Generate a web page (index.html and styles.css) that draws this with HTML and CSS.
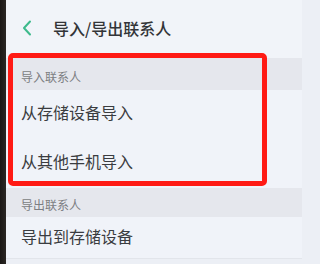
FILE: index.html
```html
<!DOCTYPE html>
<html lang="zh-CN">
<head>
<meta charset="utf-8">
<link rel="stylesheet" href="styles.css">
</head>
<body>
<div class="screen">
  <div class="edge"></div>
  <div class="content">
    <div class="topbar">
      <svg class="back" width="10" height="16" viewBox="0 0 10 16"><path d="M8 1.5 L2 8 L8 14.5" fill="none" stroke="#3dba8c" stroke-width="2" stroke-linecap="round" stroke-linejoin="round"/></svg>
      <span class="title">导入/导出联系人</span>
    </div>
    <div class="band band-first">导入联系人</div>
    <div class="row">从存储设备导入</div>
    <div class="row">从其他手机导入</div>
    <div class="band band-second">导出联系人</div>
    <div class="row row-last">导出到存储设备</div>
  </div>
  <div class="highlight"></div>
</div>
</body>
</html>
```
FILE: styles.css
```css
* { box-sizing: border-box; }
html, body { margin: 0; padding: 0; }
body {
  width: 302px;
  height: 264px;
  overflow: hidden;
  background: #eceff5;
  font-family: "Noto Sans CJK SC", "Noto Sans", sans-serif;
}
.screen {
  position: relative;
  display: flex;
  width: 302px;
  height: 264px;
}
.edge {
  width: 6px;
  flex: none;
  background: linear-gradient(to right, #1a1715, #2b2724);
}
.content {
  flex: 1;
  display: flex;
  flex-direction: column;
}
.topbar {
  height: 58px;
  display: flex;
  align-items: center;
  padding-left: 16px;
  padding-bottom: 2px;
  background: #f1f4f9;
}
.back { margin-right: 21px; }
.title {
  font-size: 16px;
  font-weight: 500;
  color: #333538;
}
.band {
  display: flex;
  align-items: center;
  padding-left: 15px;
  font-size: 12px;
  color: #7c7e82;
  background: #e5e7ed;
}
.band-first { height: 32px; padding-top: 4px; }
.band-second { height: 29px; padding-top: 4px; }
.row {
  height: 49px;
  display: flex;
  align-items: center;
  padding-left: 15px;
  padding-bottom: 6px;
  font-size: 16px;
  color: #3a3c40;
  background: #f0f3f9;
}
.row-last {
  height: 42px;
  padding-bottom: 3px;
  border-bottom: 1px solid #e2e5eb;
}
.highlight {
  position: absolute;
  left: 8px;
  top: 53px;
  width: 259px;
  height: 133px;
  border: 5px solid #ff1a14;
  border-radius: 5px;
}
```
